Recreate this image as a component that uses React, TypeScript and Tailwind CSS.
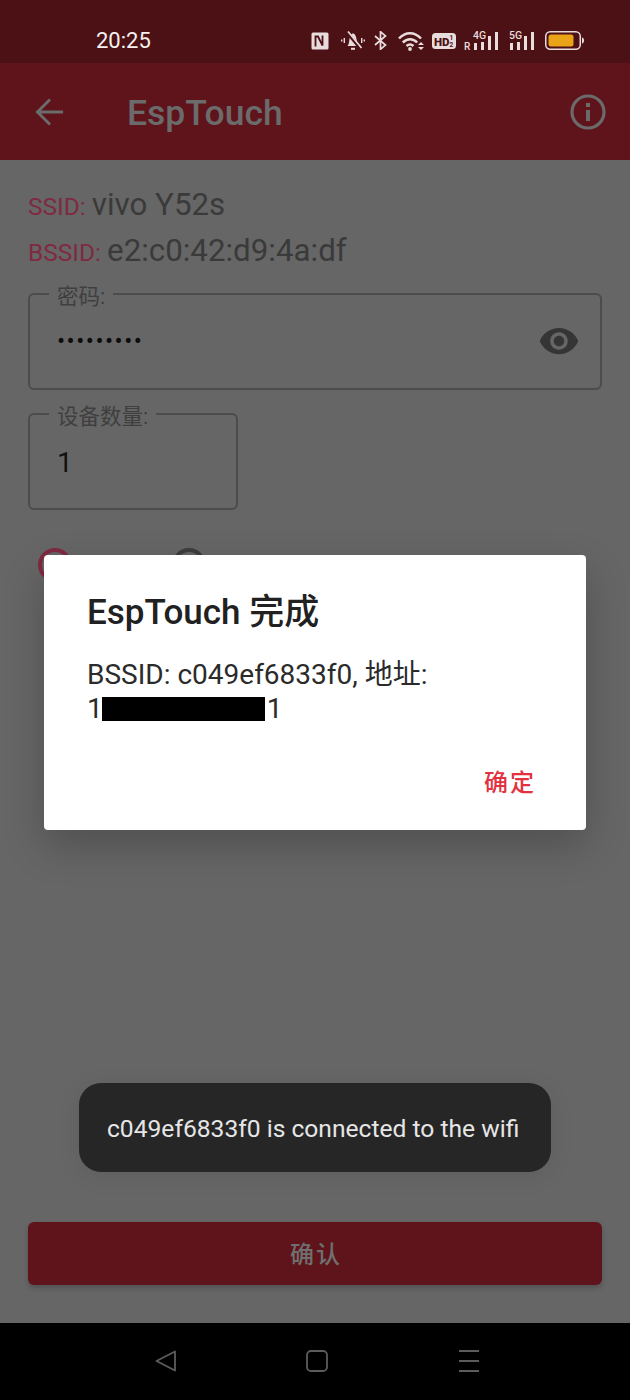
import React from 'react';

const CJK = "font-['Roboto','Noto_Sans_CJK_SC',sans-serif]";

const NfcIcon = () => (
  <svg width="18" height="18" viewBox="0 0 18 18">
    <path d="M2 0.500h14a1.500 1.500 0 0 1 1.500 1.500v14a1.500 1.500 0 0 1-1.500 1.500H2A1.500 1.500 0 0 1 .5 16V2A1.500 1.500 0 0 1 2 .5z" fill="#e9dcdc" />
    <path d="M4.500 14.500V4.500h2.500l4.500 9V3.500" fill="none" stroke="#4b1114" strokeWidth="1.800" />
  </svg>
);

const MuteIcon = () => (
  <svg width="24" height="20" viewBox="0 0 24 20" fill="none" stroke="#e9dcdc">
    <path d="M6.500 15c1.500-2 1.500-4 2-7C9 4.500 10.500 2.500 12 2.500s3 2 3.500 5.500c.5 3 .5 5 2 7z" fill="#e9dcdc" stroke="none" />
    <path d="M10 17.800h4" strokeWidth="2" />
    <path d="M6 1l13 16" stroke="#4b1114" strokeWidth="3.500" />
    <path d="M7 .5l13.500 16.500" strokeWidth="1.700" />
    <path d="M3.300 7v5M.7 8.500v2M20.700 7v5M23.300 8.500v2" strokeWidth="1.400" />
  </svg>
);

const BluetoothIcon = () => (
  <svg width="13" height="19" viewBox="0 0 13 19" fill="none" stroke="#e9dcdc" strokeWidth="1.700">
    <path d="M1 5l10.500 9-5 4.300V.7l5 4.300L1 14" />
  </svg>
);

const WifiIcon = () => (
  <svg width="26" height="20" viewBox="0 0 26 20" fill="none" stroke="#e9dcdc" strokeWidth="2.500">
    <path d="M1 7.500c6.500-7 15.500-7 22 0" />
    <path d="M4.800 11.500c4.500-4.500 10-4.500 14.400 0" />
    <path d="M8.500 15c2.300-2 4.700-2 7 0" />
    <circle cx="12" cy="18" r="1.900" fill="#e9dcdc" stroke="none" />
    <path d="M20 14h6l-3-3zM20 16h6l-3 3z" fill="#e9dcdc" stroke="none" />
  </svg>
);

const HdIcon = () => (
  <svg width="24" height="16" viewBox="0 0 24 16">
    <rect width="24" height="16" rx="3.500" fill="#e9dcdc" />
    <text x="2" y="12.500" fontSize="11.500" fontWeight="900" fontFamily="Roboto, sans-serif" fill="#4b1114">HD</text>
    <text x="17.500" y="6.800" fontSize="6.500" fontWeight="700" fontFamily="Roboto, sans-serif" fill="#4b1114">1</text>
    <text x="17.500" y="14" fontSize="6.500" fontWeight="700" fontFamily="Roboto, sans-serif" fill="#4b1114">2</text>
  </svg>
);

// Four rising bars with the network type above them, optional roaming mark
const SignalIcon = ({ label, roaming }: { label: string; roaming?: boolean }) => {
  const offset = roaming ? 9 : 0;
  return (
    <svg width={roaming ? 35 : 27} height="21" viewBox={`0 0 ${roaming ? 35 : 27} 21`}>
      {roaming && (
        <text x="0" y="20" fontSize="10" fontWeight="500" fontFamily="Roboto, sans-serif" fill="#e9dcdc">R</text>
      )}
      <text x={offset} y="8.500" fontSize="10.500" fontWeight="500" fontFamily="Roboto, sans-serif" fill="#e9dcdc">{label}</text>
      <rect x={offset + 1} y="13" width="3" height="7" fill="#e9dcdc" />
      <rect x={offset + 8} y="12" width="3" height="8" fill="#e9dcdc" />
      <rect x={offset + 15} y="6" width="3" height="14" fill="#e9dcdc" />
      <rect x={offset + 22} y="2" width="3" height="18" fill="#e9dcdc" />
    </svg>
  );
};

const BatteryIcon = () => (
  <svg width="39" height="19" viewBox="0 0 39 19">
    <rect x="0.750" y="0.750" width="34.500" height="17.500" rx="4.500" fill="none" stroke="#e9dcdc" strokeWidth="1.500" />
    <rect x="3.500" y="3.500" width="25" height="12" rx="2.500" fill="#e8a317" />
    <path d="M37 6.500c1.300.3 2 1.200 2 3s-.7 2.700-2 3z" fill="#e9dcdc" />
  </svg>
);

const StatusBar = () => (
  <div className="flex h-[63px] items-center bg-[#4b1114] pl-[96px] pr-[46px] pt-[18px]">
    <span className="text-[22px] text-[#f6f0f0]">20:25</span>
    <div className="ml-auto flex items-center">
      <div className="mr-[12px]"><NfcIcon /></div>
      <div className="mr-[9px]"><MuteIcon /></div>
      <div className="mr-[11px]"><BluetoothIcon /></div>
      <div className="mr-[8px]"><WifiIcon /></div>
      <div className="mr-[8px]"><HdIcon /></div>
      <div className="mr-[10px]"><SignalIcon label="4G" roaming /></div>
      <div className="mr-[9px]"><SignalIcon label="5G" /></div>
      <BatteryIcon />
    </div>
  </div>
);

const AppBar = () => (
  <div className="flex h-[97px] items-center bg-[#5f141b] pl-[35px] pr-[24px] text-[#6b6b6b]">
    <svg width="28" height="28" viewBox="0 0 28 28" fill="none" stroke="#6b6b6b" strokeWidth="3">
      <path d="M28 14H3M15 1.500L2.500 14 15 26.500" />
    </svg>
    <span className="ml-[64px] mt-[4px] text-[35.500px] font-[460]">EspTouch</span>
    <svg className="ml-auto" width="36" height="36" viewBox="0 0 36 36" fill="none" stroke="#6b6b6b" strokeWidth="3.200">
      <circle cx="18" cy="18" r="16" />
      <path d="M18 16v11" strokeWidth="4" />
      <path d="M18 9v4" strokeWidth="4" />
    </svg>
  </div>
);

const InfoLine = ({ label, value }: { label: string; value: string }) => (
  <div className="flex h-[46px] items-baseline">
    <span className="text-[24.500px] text-[#7f2a42]">{label}</span>
    <span className="ml-[6px] text-[31.300px] text-[#3a3a3a]">{value}</span>
  </div>
);

const Field = ({ label, className, children }: { label: string; className: string; children: React.ReactNode }) => (
  <div className={`relative h-[97px] rounded-[6px] border-2 border-[#4c4c4c] ${className}`}>
    <span className="absolute left-[19px] top-[-10px] bg-[#666666] px-[8px] text-[21.500px] leading-[24px] text-[#3f3f3f]">
      {label}
    </span>
    {children}
  </div>
);

const Toast = () => (
  <div className="absolute left-[79px] top-[1083px] flex h-[89px] w-[472px] items-center rounded-[22px] bg-[#262626] pl-[28px] pr-[30px] pt-[4px] shadow-[0_4px_24px_rgba(0,0,0,0.08)]">
    <span className="whitespace-nowrap text-[24.600px] text-[#e6e6e6]">
      c049ef6833f0 is connected to the wifi
    </span>
  </div>
);

const ResultDialog = () => (
  <div className="absolute left-[44px] top-[555px] flex h-[275px] w-[542px] flex-col rounded-[4px] bg-white pl-[43px] pr-[50px] pt-[35px] shadow-[0_16px_40px_rgba(0,0,0,0.22)]">
    <div className="text-[35px] font-[460] leading-[46px] text-[#212121]">EspTouch 完成</div>
    <div className="mt-[22px] text-[28px] leading-[34px] text-[#2b2b2b]">
      <div>BSSID: c049ef6833f0, 地址:</div>
      <div className="flex items-center">
        1<span className="ml-[-1px] mr-[2px] h-[24px] w-[163px] bg-black" />1
      </div>
    </div>
    <div className="mt-auto mb-[29px] self-end text-[24px] font-medium tracking-[2px] text-[#e2323f]">确定</div>
  </div>
);

const NavBar = () => (
  <div className="flex h-[77px] items-center justify-center gap-[130px] bg-black pb-[2px] pl-[4px]">
    <svg width="21" height="22" viewBox="0 0 21 22" fill="none" stroke="#5c5c5c" strokeWidth="1.800" strokeLinejoin="round">
      <path d="M20 1.500v19L1.500 11z" />
    </svg>
    <svg width="22" height="22" viewBox="0 0 22 22" fill="none" stroke="#5c5c5c" strokeWidth="1.800">
      <rect x="1" y="1" width="20" height="20" rx="4" />
    </svg>
    <svg width="22" height="22" viewBox="0 0 22 22" fill="none" stroke="#5c5c5c" strokeWidth="1.800">
      <path d="M1 1h20M1 11h20M1 21h20" />
    </svg>
  </div>
);

export default function App() {
  return (
    <div className={`relative flex h-[1400px] w-[630px] flex-col overflow-hidden bg-[#666666] ${CJK}`}>
      <StatusBar />
      <AppBar />

      <div className="flex flex-1 flex-col px-[28px] pt-[22px]">
        <InfoLine label="SSID:" value="vivo Y52s" />
        <InfoLine label="BSSID:" value="e2:c0:42:d9:4a:df" />

        <Field label="密码:" className="mt-[19px] w-[574px]">
          <div className="flex h-full items-center pb-[2px] pl-[27px] pr-[20px]">
            <span className="text-[24px] tracking-[1.500px] text-[#0c0c0c]">•••••••••</span>
            <svg className="ml-auto" width="42" height="42" viewBox="0 0 24 24" fill="#353535">
              <path d="M12 4.500C7 4.500 2.730 7.610 1 12c1.730 4.390 6 7.500 11 7.500s9.270-3.110 11-7.500c-1.730-4.390-6-7.500-11-7.500zM12 17c-2.760 0-5-2.240-5-5s2.240-5 5-5 5 2.240 5 5-2.240 5-5 5zm0-8c-1.660 0-3 1.340-3 3s1.340 3 3 3 3-1.340 3-3-1.340-3-3-3z" />
            </svg>
          </div>
        </Field>

        <Field label="设备数量:" className="mt-[23px] w-[210px]">
          <div className="flex h-full items-center pl-[27px] pt-[2px] text-[28px] text-[#111111]">1</div>
        </Field>

        <div className="ml-[10px] mt-[38px] flex gap-[100px]">
          <span className="h-[34px] w-[34px] rounded-full border-[4px] border-[#7f2a42]" />
          <span className="h-[34px] w-[34px] rounded-full border-[4px] border-[#3d3d3d]" />
        </div>

        <button className="mb-[38px] mt-auto h-[63px] w-[574px] rounded-[6px] bg-[#5f141b] pl-[2px] pt-[2px] text-[24px] font-medium tracking-[2px] text-[#6f6f6f] shadow-[0_3px_5px_rgba(0,0,0,0.2)]">
          确认
        </button>
      </div>

      <NavBar />

      <ResultDialog />
      <Toast />
    </div>
  );
}
